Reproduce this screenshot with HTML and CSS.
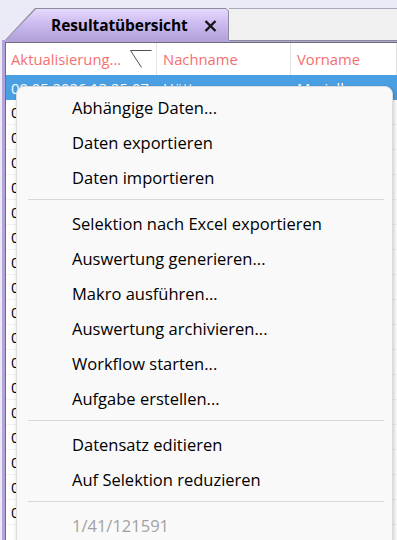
FILE: index.html
```html
<!DOCTYPE html>
<html lang="de">
<head>
<meta charset="utf-8">
<link rel="stylesheet" href="styles.css">
</head>
<body>
<div class="app">
  <div class="tabbar">
    <div class="tab">
      <div class="tab-in">
        <span class="tab-title">Resultatübersicht</span>
        <svg class="tab-close" width="13" height="12" viewBox="0 0 13 12" aria-label="Schliessen"><path d="M1.5 1L11.5 11M11.5 1L1.5 11" stroke="#151515" stroke-width="2.4" fill="none"/></svg>
      </div>
    </div>
    <div class="tab-rest"></div>
  </div>
  <div class="frame">
    <div class="grid">
      <div class="row head">
        <div class="cell c1">Aktualisierung...
          <svg class="sort" width="22" height="19" viewBox="0 0 22 19"><path d="M0.5 0.5H21.5M0.5 0.5L11.5 17.5" stroke="#505050" stroke-width="1" fill="none"/></svg>
        </div>
        <div class="cell c2">Nachname</div>
        <div class="cell c3">Vorname</div>
      </div>
      <div class="row sel">
        <div class="cell c1">09.05.2026 13:25:07</div>
        <div class="cell c2">Hütte</div>
        <div class="cell c3">Marielle</div>
      </div>
      <div class="row"><div class="cell c1">09.05.2026 13:24:51</div><div class="cell c2">Berger</div><div class="cell c3">Anna</div></div>
      <div class="row"><div class="cell c1">09.05.2026 13:22:10</div><div class="cell c2">Keller</div><div class="cell c3">Thomas</div></div>
      <div class="row"><div class="cell c1">09.05.2026 13:19:44</div><div class="cell c2">Meier</div><div class="cell c3">Sandra</div></div>
      <div class="row"><div class="cell c1">09.05.2026 13:15:02</div><div class="cell c2">Huber</div><div class="cell c3">Lukas</div></div>
      <div class="row"><div class="cell c1">09.05.2026 13:11:37</div><div class="cell c2">Schmid</div><div class="cell c3">Petra</div></div>
      <div class="row"><div class="cell c1">09.05.2026 13:08:29</div><div class="cell c2">Weber</div><div class="cell c3">Markus</div></div>
      <div class="row"><div class="cell c1">09.05.2026 13:04:15</div><div class="cell c2">Fischer</div><div class="cell c3">Julia</div></div>
      <div class="row"><div class="cell c1">09.05.2026 12:58:03</div><div class="cell c2">Brunner</div><div class="cell c3">Stefan</div></div>
      <div class="row"><div class="cell c1">09.05.2026 12:51:48</div><div class="cell c2">Baumann</div><div class="cell c3">Claudia</div></div>
      <div class="row"><div class="cell c1">09.05.2026 12:47:20</div><div class="cell c2">Frei</div><div class="cell c3">Daniel</div></div>
      <div class="row"><div class="cell c1">09.05.2026 12:40:11</div><div class="cell c2">Zimmermann</div><div class="cell c3">Monika</div></div>
      <div class="row"><div class="cell c1">09.05.2026 12:36:57</div><div class="cell c2">Steiner</div><div class="cell c3">Reto</div></div>
      <div class="row"><div class="cell c1">09.05.2026 12:30:42</div><div class="cell c2">Moser</div><div class="cell c3">Sabine</div></div>
      <div class="row"><div class="cell c1">09.05.2026 12:25:19</div><div class="cell c2">Graf</div><div class="cell c3">Martin</div></div>
      <div class="row"><div class="cell c1">09.05.2026 12:18:06</div><div class="cell c2">Wyss</div><div class="cell c3">Nicole</div></div>
      <div class="row"><div class="cell c1">09.05.2026 12:12:33</div><div class="cell c2">Roth</div><div class="cell c3">Beat</div></div>
      <div class="row"><div class="cell c1">09.05.2026 12:05:50</div><div class="cell c2">Gerber</div><div class="cell c3">Karin</div></div>
    </div>
  </div>

  <div class="menu">
    <div class="item">Abhängige Daten...</div>
    <div class="item">Daten exportieren</div>
    <div class="item">Daten importieren</div>
    <div class="sep"></div>
    <div class="item">Selektion nach Excel exportieren</div>
    <div class="item">Auswertung generieren...</div>
    <div class="item">Makro ausführen...</div>
    <div class="item">Auswertung archivieren...</div>
    <div class="item">Workflow starten...</div>
    <div class="item">Aufgabe erstellen...</div>
    <div class="sep"></div>
    <div class="item">Datensatz editieren</div>
    <div class="item">Auf Selektion reduzieren</div>
    <div class="sep"></div>
    <div class="item disabled">1/41/121591</div>
  </div>
</div>
</body>
</html>
```

FILE: styles.css
```css
html, body {
  margin: 0;
  padding: 0;
  width: 397px;
  height: 540px;
  overflow: hidden;
  background: #ebebf7;
  font-family: "Open Sans", "Noto Sans", sans-serif;
}

.app {
  position: relative;
  width: 397px;
  height: 540px;
  overflow: hidden;
}

.tabbar {
  display: flex;
  padding-top: 8px;
  height: 32px;
}

.tab {
  margin-left: 5px;
  width: 224px;
  height: 32px;
  background: #8c8c9c;
  clip-path: polygon(30px 0, 221px 0, 224px 3px, 224px 100%, 0 100%);
  display: flex;
}

.tab-in {
  flex: 1;
  margin: 1px 1px 0 1px;
  background: linear-gradient(#e6d8fd, #cdbcf0 45%, #b3a2da);
  clip-path: polygon(30px 0, 220px 0, 222px 2px, 222px 100%, 0 100%);
  display: flex;
  align-items: center;
  padding-left: 45px;
  padding-top: 1px;
}

.tab-title {
  font-weight: 700;
  font-size: 15.5px;
  color: #000;
  letter-spacing: -0.1px;
}

.tab-close {
  margin-left: 16px;
  margin-top: 1px;
}

.tab-rest {
  flex: 1;
  background: #f0f0f0;
  border-top: 1px solid #a8a8b8;
  border-bottom: 1px solid #8a8a96;
  height: 31px;
}

.frame {
  margin-left: 2px;
  border-left: 3px solid #b4a4d8;
  border-top: 2px solid #b4a4d8;
}

.grid {
  border-left: 1px solid #6c6c7a;
  border-top: 1px solid #6c6c7a;
  background: #fff;
  height: 520px;
}

.row {
  display: flex;
  height: 25px;
  align-items: center;
  font-size: 14.8px;
  color: #000;
  border-bottom: 1px solid #f2f2f2;
  box-sizing: border-box;
}

.row.head {
  height: 32px;
  color: #f47070;
  border-bottom: none;
}

.row.sel {
  background: #4a9fe3;
  color: #fff;
  border-bottom: none;
}

.cell {
  box-sizing: border-box;
  padding-left: 6px;
  height: 100%;
  display: flex;
  align-items: center;
  white-space: nowrap;
  overflow: hidden;
}

.head .cell {
  border-right: 1px solid #e2e2e2;
}

.c1 { width: 151px; position: relative; padding-left: 5px; }
.c2 { width: 134px; }
.c3 { flex: 1; }

.sort {
  position: absolute;
  left: 124px;
  top: 7px;
}

.menu {
  position: absolute;
  left: 16px;
  top: 86px;
  width: 377px;
  height: 470px;
  background: #f9f9f9;
  border: 1px solid #dcdcdc;
  border-radius: 8px 8px 0 0;
  box-shadow: 1px 2px 4px rgba(0, 0, 0, 0.22);
  padding-top: 3px;
  box-sizing: border-box;
}

.item {
  height: 35px;
  display: flex;
  align-items: center;
  padding-left: 55px;
  font-size: 16.5px;
  color: #000;
}

.item.disabled {
  color: #a2a2a2;
}

.sep {
  height: 1px;
  background: #d8d8d8;
  margin: 4px 8px 6px 11px;
}
```
